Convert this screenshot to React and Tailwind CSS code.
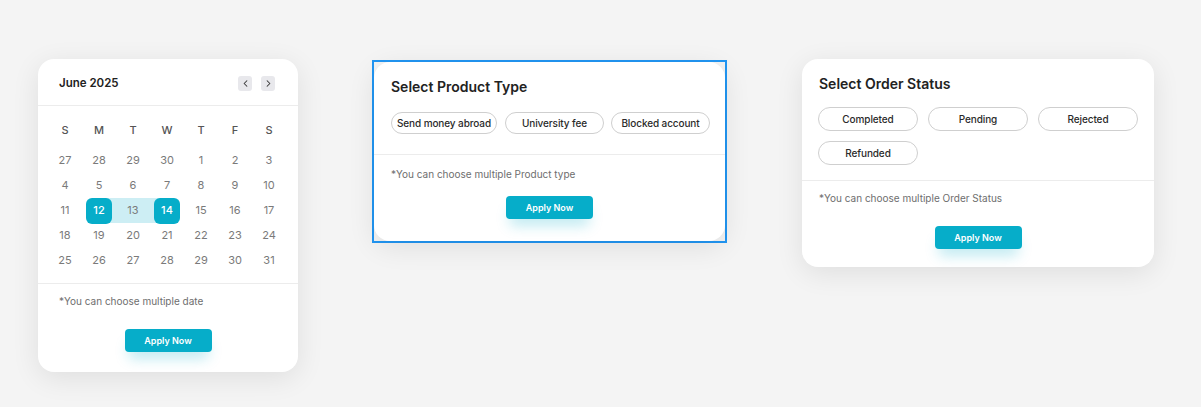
import { ChevronLeft, ChevronRight } from 'lucide-react'
import clsx from 'clsx'

const WEEK = ['S', 'M', 'T', 'W', 'T', 'F', 'S']
const ROWS = [
  [27, 28, 29, 30, 1, 2, 3],
  [4, 5, 6, 7, 8, 9, 10],
  [11, 12, 13, 14, 15, 16, 17],
  [18, 19, 20, 21, 22, 23, 24],
  [25, 26, 27, 28, 29, 30, 31],
]

function ApplyButton() {
  return (
    <div className="flex justify-center">
      <button className="w-[87px] h-[23px] rounded-[4px] bg-[#06adc9] text-white text-[9px] font-semibold shadow-[0_10px_14px_-4px_rgba(6,173,201,0.28)]">
        Apply Now
      </button>
    </div>
  )
}

function DayCell({ day, rowIdx }) {
  const inRow = rowIdx === 2
  const selected = inRow && (day === 12 || day === 14)
  const range = inRow && day === 13
  return (
    <div className={clsx('w-[34px] h-[25px] flex items-center justify-center',
      inRow && day === 12 && 'bg-[linear-gradient(to_right,transparent_50%,#cdeef4_50%)]',
      inRow && day === 14 && 'bg-[linear-gradient(to_right,#cdeef4_50%,transparent_50%)]',
      range && 'bg-[#cdeef4]')}>
      {selected ? (
        <span className="w-[26px] h-[26px] rounded-[6px] bg-[#06adc9] text-white text-[11px] font-medium flex items-center justify-center">{day}</span>
      ) : (
        <span className="text-[11px] text-[#7a7a7a]">{day}</span>
      )}
    </div>
  )
}

function Calendar() {
  return (
    <div className="w-[260px] bg-white rounded-[16px] shadow-[0_6px_28px_rgba(0,0,0,0.09)]">
      <div className="h-[47px] flex items-center justify-between pt-[3px] pl-[21px] pr-[23px] border-b border-[#ececec]">
        <span className="text-[11.5px] font-semibold text-[#222]">June 2025</span>
        <div className="flex gap-[9px]">
          <button className="w-[14px] h-[15px] rounded-[3px] bg-[#e8e8ec] flex items-center justify-center text-[#333]">
            <ChevronLeft size={11} strokeWidth={2.2} />
          </button>
          <button className="w-[14px] h-[15px] rounded-[3px] bg-[#e8e8ec] flex items-center justify-center text-[#333]">
            <ChevronRight size={11} strokeWidth={2.2} />
          </button>
        </div>
      </div>
      <div className="px-[10px] pt-[12px] pb-[10px] border-b border-[#ececec]">
        <div className="flex h-[24px] items-center">
          {WEEK.map((w, i) => (
            <span key={i} className="w-[34px] text-center text-[11px] font-medium text-[#555]">{w}</span>
          ))}
        </div>
        <div className="mt-[6px]">
          {ROWS.map((row, r) => (
            <div key={r} className="flex">
              {row.map((d, i) => <DayCell key={i} day={d} rowIdx={r} />)}
            </div>
          ))}
        </div>
      </div>
      <div className="px-[21px] pt-[10px] pb-[20px]">
        <p className="text-[10px] leading-[14px] text-[#6e6e6e]">*You can choose multiple date</p>
        <div className="mt-[21px]"><ApplyButton /></div>
      </div>
    </div>
  )
}

function Chip({ label, className }) {
  return (
    <span className={clsx('rounded-full border border-[#cfcfcf] flex items-center justify-center text-[10px] font-medium tracking-[-0.1px] text-[#2a2a2a]', className)}>
      {label}
    </span>
  )
}

function ProductType() {
  return (
    <div className="border-2 border-[#2196f3] mt-px">
      <div className="w-[351px] bg-white rounded-[16px] shadow-[0_6px_28px_rgba(0,0,0,0.09)]">
        <div className="pl-[17px] pr-[14px] pt-[15px] pb-[20px] border-b border-[#ececec]">
          <h2 className="text-[14px] leading-[20px] font-semibold text-[#222]">Select Product Type</h2>
          <div className="flex mt-[15px]">
            <Chip label="Send money abroad" className="w-[106px] h-[22px]" />
            <Chip label="University fee" className="w-[99px] h-[22px] ml-[8px]" />
            <Chip label="Blocked account" className="w-[99px] h-[22px] ml-[7px]" />
          </div>
        </div>
        <div className="pl-[17px] pr-[17px] pt-[12px] pb-[22px]">
          <p className="text-[10px] leading-[14px] text-[#6e6e6e]">*You can choose multiple Product type</p>
          <div className="mt-[15px]"><ApplyButton /></div>
        </div>
      </div>
    </div>
  )
}

function OrderStatus() {
  const items = ['Completed', 'Pending', 'Rejected', 'Refunded']
  return (
    <div className="w-[352px] bg-white rounded-[16px] shadow-[0_6px_28px_rgba(0,0,0,0.09)]">
      <div className="px-[16px] pt-[15px] pb-[15px] border-b border-[#ececec]">
        <h2 className="pl-px text-[14px] leading-[20px] font-semibold text-[#222]">Select Order Status</h2>
        <div className="grid grid-cols-3 gap-[10px] mt-[13px]">
          {items.map((s) => <Chip key={s} label={s} className="h-[24px]" />)}
        </div>
      </div>
      <div className="px-[17px] pt-[10px] pb-[18px]">
        <p className="text-[10px] leading-[14px] text-[#6e6e6e]">*You can choose multiple Order Status</p>
        <div className="mt-[21px]"><ApplyButton /></div>
      </div>
    </div>
  )
}

export default function App() {
  return (
    <div className="w-[1201px] h-[407px] bg-[#f4f4f4] flex items-start pt-[59px] pl-[38px] font-['Inter',sans-serif]">
      <Calendar />
      <div className="ml-[74px]"><ProductType /></div>
      <div className="ml-[75px]"><OrderStatus /></div>
    </div>
  )
}
